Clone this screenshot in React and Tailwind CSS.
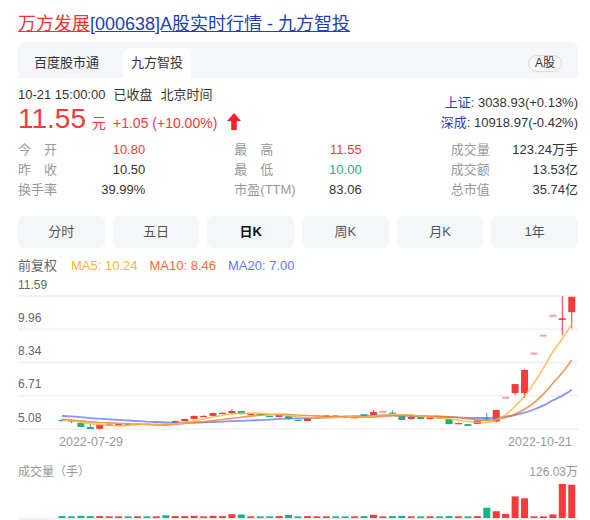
const RED = '#f53a3a';
const GREEN = '#16b387';
const PINK = '#f6a3a3';

// [open, close, high, low, volume(万手)]
const candles = [
  [5.52, 5.5, 5.57, 5.47, 7],
  [5.5, 5.45, 5.57, 5.37, 6],
  [5.37, 5.18, 5.4, 5.16, 8],
  [5.18, 5.08, 5.32, 5.08, 7],
  [5.09, 5.28, 5.28, 5.06, 7],
  [5.25, 5.3, 5.35, 5.23, 6],
  [5.3, 5.32, 5.35, 5.28, 6],
  [5.32, 5.3, 5.34, 5.28, 6],
  [5.3, 5.33, 5.35, 5.29, 6],
  [5.33, 5.31, 5.34, 5.29, 6],
  [5.31, 5.32, 5.34, 5.29, 6],
  [5.33, 5.3, 5.34, 5.29, 10],
  [5.37, 5.47, 5.5, 5.36, 7],
  [5.47, 5.57, 5.59, 5.46, 7],
  [5.57, 5.72, 5.74, 5.56, 8],
  [5.7, 5.72, 5.75, 5.68, 6],
  [5.72, 5.86, 5.88, 5.71, 8],
  [5.85, 5.87, 5.9, 5.83, 7],
  [5.86, 5.96, 6.06, 5.85, 14],
  [5.96, 5.81, 5.97, 5.8, 13],
  [5.8, 5.82, 5.84, 5.78, 6],
  [5.82, 5.79, 5.84, 5.78, 6],
  [5.72, 5.67, 5.73, 5.66, 6],
  [5.67, 5.81, 5.82, 5.66, 7],
  [5.72, 5.57, 5.73, 5.56, 11],
  [5.53, 5.51, 5.54, 5.5, 6],
  [5.47, 5.62, 5.63, 5.46, 7],
  [5.62, 5.65, 5.67, 5.6, 6],
  [5.7, 5.74, 5.77, 5.69, 6],
  [5.74, 5.71, 5.75, 5.69, 6],
  [5.69, 5.62, 5.7, 5.61, 6],
  [5.64, 5.66, 5.69, 5.62, 6],
  [5.8, 5.67, 5.81, 5.66, 7],
  [5.76, 5.91, 6.01, 5.75, 12],
  [5.92, 5.92, 5.92, 5.92, 5],
  [5.88, 5.85, 6.0, 5.74, 7],
  [5.72, 5.52, 5.73, 5.51, 8],
  [5.57, 5.67, 5.69, 5.55, 6],
  [5.67, 5.57, 5.68, 5.56, 6],
  [5.57, 5.67, 5.7, 5.56, 6],
  [5.65, 5.64, 5.67, 5.62, 6],
  [5.57, 5.32, 5.58, 5.31, 7],
  [5.35, 5.37, 5.4, 5.34, 6],
  [5.32, 5.23, 5.33, 5.22, 6],
  [5.33, 5.5, 5.52, 5.32, 7],
  [5.6, 5.57, 5.86, 5.42, 38],
  [5.45, 6.01, 6.02, 5.4, 25],
  [6.61, 6.61, 6.61, 6.61, 15],
  [6.84, 7.28, 7.28, 6.74, 80],
  [6.84, 7.97, 8.0, 6.6, 73],
  [8.77, 8.77, 8.77, 8.77, 4],
  [9.65, 9.65, 9.65, 9.65, 4],
  [10.62, 10.62, 10.62, 10.62, 13],
  [10.42, 10.5, 11.58, 9.68, 126.03],
  [10.8, 11.55, 11.55, 10.0, 123.24],
];

// closes before the visible window, so MA20 starts at the first candle
const history = [5.9, 5.95, 5.98, 5.92, 5.88, 5.9, 5.85, 5.82, 5.86, 5.8, 5.78, 5.62, 5.58, 5.55, 5.52, 5.5, 5.53, 5.49, 5.47];

const TOP = 11.59;
const BOTTOM = 5.08;
const GRID_TOP = 20;
const GRID_BOTTOM = 153;
const py = (p) => GRID_TOP + ((TOP - p) * (GRID_BOTTOM - GRID_TOP)) / (TOP - BOTTOM);
const cx = (i) => 44 + i * 9.44;

const closes = history.concat(candles.map((c) => c[1]));
const ma = (n) =>
  candles.map((_, i) => {
    const end = history.length + i;
    let sum = 0;
    for (let k = end - n + 1; k <= end; k++) sum += closes[k];
    return [cx(i), py(sum / n)];
  });

const smooth = (pts) => {
  let d = `M${pts[0][0]},${pts[0][1]}`;
  for (let i = 0; i < pts.length - 1; i++) {
    const p0 = pts[i - 1] || pts[i];
    const p1 = pts[i];
    const p2 = pts[i + 1];
    const p3 = pts[i + 2] || p2;
    const c1x = p1[0] + (p2[0] - p0[0]) / 6;
    const c1y = p1[1] + (p2[1] - p0[1]) / 6;
    const c2x = p2[0] - (p3[0] - p1[0]) / 6;
    const c2y = p2[1] - (p3[1] - p1[1]) / 6;
    d += ` C${c1x.toFixed(1)},${c1y.toFixed(1)} ${c2x.toFixed(1)},${c2y.toFixed(1)} ${p2[0].toFixed(1)},${p2[1].toFixed(1)}`;
  }
  return d;
};

const stats = [
  ['今　开', '10.80', 'text-[#f53a3a]'],
  ['最　高', '11.55', 'text-[#f53a3a]'],
  ['成交量', '123.24万手', 'text-[#333]'],
  ['昨　收', '10.50', 'text-[#333]'],
  ['最　低', '10.00', 'text-[#16b387]'],
  ['成交额', '13.53亿', 'text-[#333]'],
  ['换手率', '39.99%', 'text-[#333]'],
  ['市盈(TTM)', '83.06', 'text-[#333]'],
  ['总市值', '35.74亿', 'text-[#333]'],
];

const periods = ['分时', '五日', '日K', '周K', '月K', '1年'];
const gridValues = ['11.59', '9.96', '8.34', '6.71', '5.08'];

function PriceChart() {
  return (
    <svg width="560" height="172" className="block">
      {gridValues.map((v, i) => {
        const y = GRID_TOP + (i * (GRID_BOTTOM - GRID_TOP)) / 4;
        return (
          <g key={v}>
            <rect x="0" y={y - 1} width="560" height="2" fill="#f3f3f3" />
            <text x="0" y={y - 7.5} fontSize="12" fill="#666">
              {v}
            </text>
          </g>
        );
      })}
      {candles.map(([o, c, h, l], i) => {
        const x = cx(i);
        if (o === c && h === l) {
          return <rect key={i} x={x - 3.5} y={py(c) - 1} width="7" height="2" fill={PINK} />;
        }
        const color = c >= o ? RED : GREEN;
        const top = py(Math.max(o, c));
        const bh = Math.max(1.2, py(Math.min(o, c)) - top);
        return (
          <g key={i} fill={color}>
            <rect x={x - 0.5} y={py(h)} width="1" height={Math.max(1, py(l) - py(h))} />
            <rect x={x - 3.5} y={top} width="7" height={bh} />
          </g>
        );
      })}
      <path d={smooth(ma(20))} fill="none" stroke="#5b74ee" strokeWidth="1.8" strokeOpacity="0.75" />
      <path d={smooth(ma(10))} fill="none" stroke="#f87a2c" strokeWidth="1.6" strokeOpacity="0.8" />
      <path d={smooth(ma(5))} fill="none" stroke="#fcb43a" strokeWidth="1.6" strokeOpacity="0.8" />
      <text x="41" y="170" fontSize="12.5" fill="#999">
        2022-07-29
      </text>
      <text x="554" y="170" fontSize="12.5" fill="#999" textAnchor="end">
        2022-10-21
      </text>
    </svg>
  );
}

function VolumeChart() {
  const max = 126.03;
  return (
    <svg width="560" height="38" className="block">
      {candles.map(([o, c, , , v], i) => {
        const h = Math.max(1.6, (v / max) * 34);
        const color = c >= o ? RED : GREEN;
        return <rect key={i} x={cx(i) - 3.5} y={36 - h} width="7" height={h} fill={color} />;
      })}
      <rect x="0" y="36" width="560" height="1.5" fill="#ececec" />
    </svg>
  );
}

export default function App() {
  return (
    <div className="w-[590px] h-[520px] overflow-hidden bg-white pl-[18px] pr-[12px] pt-[12px] text-[#333] font-['Liberation_Sans','Noto_Sans_CJK_SC',sans-serif]">
      <h1 className="text-[18px] leading-[24px] font-normal whitespace-nowrap">
        <a className="text-[#f73131] underline">万方发展</a>
        <a className="text-[#2440b3] underline">[000638]A股实时行情 - 九方智投</a>
      </h1>

      <div className="mt-[6px] h-[36px] rounded-t-[8px] bg-[#f5f6f9] flex items-end gap-4 pl-[8px] pr-[16px]">
        <div className="h-[30px] px-2 flex items-center text-[13px] text-[#333]">百度股市通</div>
        <div className="h-[30px] px-2 flex items-center text-[13px] text-[#333] bg-white rounded-t-[8px]">九方智投</div>
        <div className="ml-auto mb-[6px] h-[17px] px-[6px] rounded-full border border-[#d9d9d9] bg-[#f7f7f7] text-[12px] leading-[15px] text-[#333]">
          A股
        </div>
      </div>

      <div className="mt-[8px] flex justify-between items-start">
        <div>
          <div className="flex gap-2 text-[13px] leading-[18px] text-[#333]">
            <span>10-21 15:00:00</span>
            <span>已收盘</span>
            <span>北京时间</span>
          </div>
          <div className="flex items-baseline h-[30px] text-[#f53a3a]">
            <span className="text-[28px] leading-[30px]">11.55</span>
            <span className="ml-[6px] text-[14px]">元</span>
            <span className="ml-[7px] text-[14px]">+1.05 (+10.00%)</span>
            <svg width="14" height="17" viewBox="0 0 14 17" className="ml-[10px] self-center mt-[4px]">
              <polygon points="7,0 14,8 9.8,8 9.8,17 4.2,17 4.2,8 0,8" fill="#f5222d" />
            </svg>
          </div>
        </div>
        <div className="mt-[7px] text-right text-[13px] leading-[20px] text-[#333]">
          <div>
            <span className="text-[#2440b3]">上证</span>: 3038.93(+0.13%)
          </div>
          <div>
            <span className="text-[#2440b3]">深成</span>: 10918.97(-0.42%)
          </div>
        </div>
      </div>

      <div className="mt-[6px] grid grid-cols-3 gap-x-[89px] text-[13px] leading-[20px]">
        {stats.map(([label, value, color]) => (
          <div key={label} className="flex justify-between">
            <span className="text-[#999]">{label}</span>
            <span className={color}>{value}</span>
          </div>
        ))}
      </div>

      <div className="mt-[16px] grid grid-cols-6 gap-[8px]">
        {periods.map((p) => (
          <div
            key={p}
            className={
              p === '日K'
                ? 'h-[32px] rounded-[6px] bg-[#f5f6f8] flex items-center justify-center text-[13px] font-bold text-[#111]'
                : 'h-[32px] rounded-[6px] bg-[#f5f6f8] flex items-center justify-center text-[13px] text-[#555]'
            }
          >
            {p}
          </div>
        ))}
      </div>

      <div className="mt-[8px] flex gap-[12px] text-[13px] leading-[20px]">
        <span className="text-[#666]">前复权</span>
        <span className="ml-[2px] text-[#fdb23e]">MA5: 10.24</span>
        <span className="text-[#ff6633]">MA10: 8.46</span>
        <span className="text-[#6677f7]">MA20: 7.00</span>
      </div>

      <PriceChart />

      <div className="mt-[14px] flex justify-between text-[12px] leading-[20px] text-[#999]">
        <span>成交量（手）</span>
        <span>126.03万</span>
      </div>
      <VolumeChart />
    </div>
  );
}
